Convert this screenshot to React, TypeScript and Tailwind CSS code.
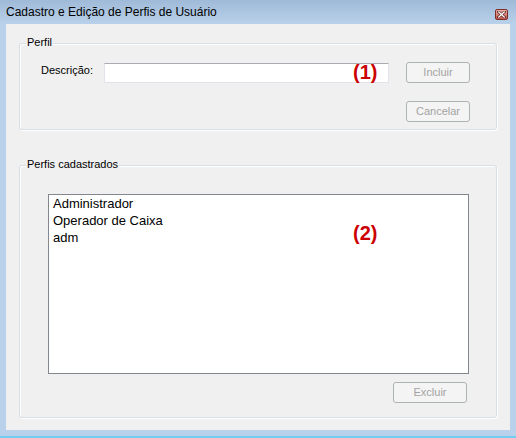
import React from "react";

function CloseBtn() {
  return (
    <div className="mt-[9px] w-[13px] h-[11px] rounded-[2px] border border-[#7b2e2a] bg-gradient-to-b from-[#eab0a8] to-[#c2564c] flex items-center justify-center">
      <svg width="9" height="7" viewBox="0 0 9 7">
        <path d="M1.5 0.8 L7.5 6.2 M7.5 0.8 L1.5 6.2" stroke="#5a1f1b" strokeWidth="2.6" strokeLinecap="square" />
        <path d="M1.8 1 L7.2 6 M7.2 1 L1.8 6" stroke="#ffffff" strokeWidth="1.3" strokeLinecap="square" />
      </svg>
    </div>
  );
}

function DisabledButton({ label, w }: { label: string; w: string }) {
  return (
    <div
      className={`${w} h-[21px] rounded-[3px] border border-[#adb2b5] bg-[#f4f4f4] text-[#a3a3a3] text-[11px] leading-[13px] flex items-center justify-center`}
    >
      {label}
    </div>
  );
}

function GroupLabel({ text }: { text: string }) {
  return (
    <span className="absolute left-[6px] top-[-8px] px-[1px] bg-[#f0f0f0] text-[11px] leading-[13px] text-black">
      {text}
    </span>
  );
}

export default function App() {
  return (
    <div className="w-[516px] h-[438px] flex flex-col bg-[#b9d1ea] font-['Liberation_Sans',Arial,sans-serif] overflow-hidden">
      {/* Title bar */}
      <div className="h-[24px] flex items-start justify-between pl-[6px] pr-[8px] bg-gradient-to-b from-[#9fbad8] to-[#b9d1ea]">
        <span className="mt-[5px] text-[12px] leading-[14px] text-black">
          Cadastro e Edição de Perfis de Usuário
        </span>
        <CloseBtn />
      </div>

      {/* Client area */}
      <div className="mx-[6px] h-[406px] bg-[#f0f0f0] px-[13px] pt-[19px]">
        {/* Group: Perfil */}
        <div className="relative h-[87px] rounded-[3px] border border-[#d5dfe5] shadow-[inset_1px_1px_0_#ffffff,1px_1px_0_#ffffff]">
          <GroupLabel text="Perfil" />
          <div className="flex items-start pt-[18px] pl-[21px]">
            <span className="mt-[2px] w-[63px] text-[11px] leading-[13px] text-black">Descrição:</span>
            <div className="relative mt-[1px] w-[285px] h-[20px] bg-white border border-[#e2e3ea] border-t-[#abadb3]">
              <span className="absolute left-[248px] top-[-3px] text-[20px] leading-[22px] font-bold text-[#cc0000]">
                (1)
              </span>
            </div>
            <div className="ml-[17px] flex flex-col gap-[18px]">
              <DisabledButton label="Incluir" w="w-[64px]" />
              <DisabledButton label="Cancelar" w="w-[64px]" />
            </div>
          </div>
        </div>

        {/* Group: Perfis cadastrados */}
        <div className="relative mt-[35px] h-[253px] rounded-[3px] border border-[#d5dfe5] shadow-[inset_1px_1px_0_#ffffff,1px_1px_0_#ffffff]">
          <GroupLabel text="Perfis cadastrados" />
          <div className="pt-[28px] pl-[28px] w-fit">
            <div className="relative w-[421px] h-[180px] bg-white border border-[#828790] pl-[4px] text-[13px] leading-[17px] text-black">
              <div>Administrador</div>
              <div>Operador de Caixa</div>
              <div>adm</div>
              <span className="absolute left-[304px] top-[27px] text-[20px] leading-[22px] font-bold text-[#cc0000]">
                (2)
              </span>
            </div>
            <div className="mt-[8px] flex justify-end pr-[2px]">
              <DisabledButton label="Excluir" w="w-[74px]" />
            </div>
          </div>
        </div>
      </div>

      <div className="h-[6px]" />
      <div className="h-[2px] bg-[#72cdf0]" />
    </div>
  );
}
